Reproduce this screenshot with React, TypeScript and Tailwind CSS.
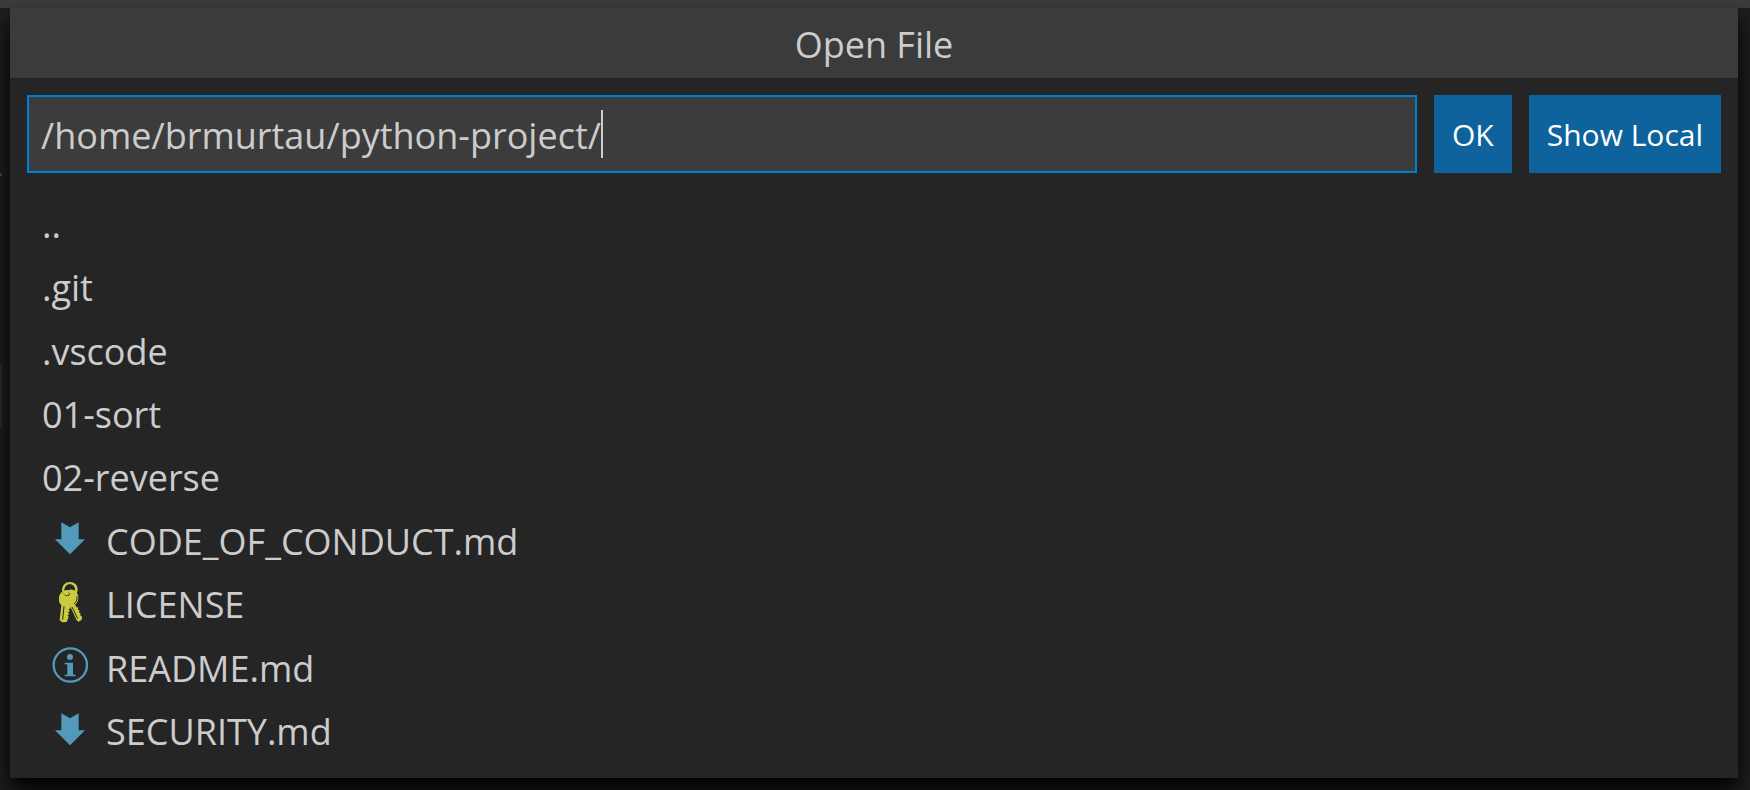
import { useState } from "react";

type IconKind = "markdown" | "license" | "info";

const entries: { name: string; icon?: IconKind }[] = [
  { name: ".." },
  { name: ".git" },
  { name: ".vscode" },
  { name: "01-sort" },
  { name: "02-reverse" },
  { name: "CODE_OF_CONDUCT.md", icon: "markdown" },
  { name: "LICENSE", icon: "license" },
  { name: "README.md", icon: "info" },
  { name: "SECURITY.md", icon: "markdown" },
];

function MarkdownIcon() {
  return (
    <svg viewBox="0 0 120 132" className="h-11 w-10" fill="#519aba" aria-hidden="true">
      <path d="M34 16 L60 31 L86 16 V67 H105 L60 112 L15 67 H34 Z" />
    </svg>
  );
}

function LicenseIcon() {
  return (
    <svg viewBox="0 0 120 132" className="h-11 w-10" fill="#cbcb41" aria-hidden="true">
      <path d="M60 3 C46 3 37 12 36 27 L43 27 C44 16 51 10 60 10 C69 10 75 17 75 25 C75 28 74 30 73 32 L80 37 C82 33 83 29 83 24 C83 12 73 3 60 3 Z" />
      <path d="M58 26 C72 24 85 34 85 50 C85 60 80 68 75 71 L79 78 L85 80 L83 86 L89 88 L86 94 L92 97 L90 102 L96 107 L95 116 L86 122 L80 118 L60 75 Z" />
      <path d="M52 27 C66 27 77 38 77 51 C77 61 71 70 62 73 L61 82 L56 85 L60 90 L54 94 L58 99 L53 103 L56 108 L50 123 L37 124 L29 118 L34 73 C28 67 26 60 27 51 C28 37 38 27 52 27 Z" />
      <path
        d="M37 25 C38 37 44 44 52 44 C59 44 61 38 56 35 M72 69 C79 64 82 56 81 46 M42 76 L38 116 M66 78 L83 113"
        fill="none"
        stroke="#252526"
        strokeWidth="3"
      />
      <path d="M39 24 C39 35 44 39 51 39" fill="none" stroke="#cbcb41" strokeWidth="6" />
    </svg>
  );
}

function InfoIcon() {
  return (
    <svg viewBox="0 0 120 132" className="h-11 w-10" fill="#519aba" aria-hidden="true">
      <circle cx="61" cy="63" r="50" fill="none" stroke="#519aba" strokeWidth="7" />
      <circle cx="60" cy="39" r="9" />
      <path d="M44 56 H69 V89 Q69 92 72 92 H77 V97 H44 V92 H49 Q52 92 52 89 V64 Q52 61 49 61 H44 Z" />
    </svg>
  );
}

function FileIcon({ kind }: { kind: IconKind }) {
  if (kind === "license") return <LicenseIcon />;
  if (kind === "info") return <InfoIcon />;
  return <MarkdownIcon />;
}

export default function App() {
  const [path, setPath] = useState("/home/brmurtau/python-project/");

  return (
    <div className="relative flex min-h-screen flex-col overflow-hidden bg-[#1e1e1e] font-['Open_Sans','Noto_Sans',sans-serif] text-[#cccccc]">
      <div className="h-2 bg-[#3c3c3c]" />
      <div className="absolute top-[173px] left-0 h-[3px] w-[2px] bg-[#444444]" />
      <div className="absolute top-[363px] left-0 h-16 w-[2px] bg-[#2a2a31]" />
      <main
        role="dialog"
        aria-labelledby="dialog-title"
        className="relative mr-3 mb-3 ml-[10px] flex grow flex-col bg-[#252526] shadow-[0_12px_20px_#000000]"
      >
        <h1
          id="dialog-title"
          className="flex h-[70px] items-center justify-center bg-[#3b3b3b] pt-1 text-[36px] leading-[48px]"
        >
          Open File
        </h1>
        <form
          className="flex gap-[17px] px-[17px] pt-[17px] text-[30px]"
          onSubmit={(event) => event.preventDefault()}
        >
          <label className="flex h-[78px] min-w-0 grow cursor-text items-center border-2 border-[#007fd4] bg-[#3c3c3c] pl-3 text-[36px]">
            <input
              type="text"
              aria-label="File path"
              value={path}
              onChange={(event) => setPath(event.target.value)}
              className="max-w-full min-w-0 bg-transparent pt-1 caret-transparent outline-none [field-sizing:content]"
            />
            <span className="h-12 w-[2px] shrink-0 bg-[#cccccc]" />
          </label>
          <button type="submit" className="bg-[#0e639c] px-[18px] text-white">
            OK
          </button>
          <button type="button" className="bg-[#0e639c] px-[18px] text-white">
            Show Local
          </button>
        </form>
        <ul className="mt-5 mb-[14px] grid grow auto-rows-fr px-8 text-[36px] leading-[48px]">
          {entries.map((entry) => (
            <li key={entry.name} className="flex items-center">
              {entry.icon && (
                <span className="mr-4 mb-[5px] ml-2">
                  <FileIcon kind={entry.icon} />
                </span>
              )}
              <span>{entry.name}</span>
            </li>
          ))}
        </ul>
      </main>
    </div>
  );
}
